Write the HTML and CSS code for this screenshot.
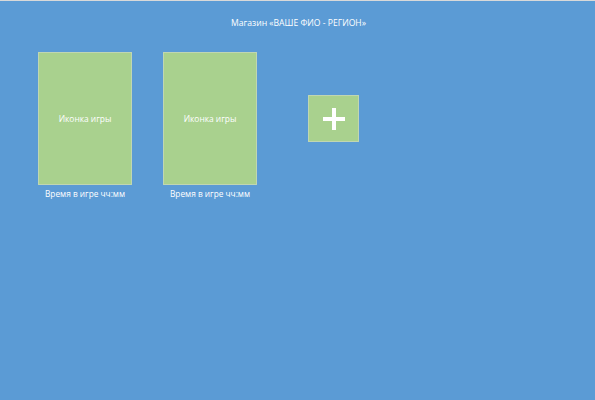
FILE: index.html
```html
<!DOCTYPE html>
<html lang="ru">
<head>
<meta charset="utf-8">
<title>Магазин</title>
<link rel="stylesheet" href="styles.css">
</head>
<body>
<div class="screen">
  <header class="title">Магазин «ВАШЕ ФИО - РЕГИОН»</header>
  <main class="games">
    <div class="game">
      <div class="icon">Иконка игры</div>
      <div class="time">Время в игре чч:мм</div>
    </div>
    <div class="game">
      <div class="icon">Иконка игры</div>
      <div class="time">Время в игре чч:мм</div>
    </div>
    <button class="add" aria-label="Добавить">
      <svg width="22" height="22" viewBox="0 0 22 22"><path d="M9 0h4v9h9v4h-9v9H9v-9H0V9h9z" fill="#fff"/></svg>
    </button>
  </main>
</div>
</body>
</html>
```
FILE: styles.css
```css
html, body {
  margin: 0;
  padding: 0;
  height: 100%;
}
body {
  background: #5b9bd5;
  font-family: "Open Sans", "Noto Sans", sans-serif;
  color: #fff;
}
.screen {
  height: 100%;
  box-sizing: border-box;
  border-top: 1px solid #d9d9d9;
}
.title {
  text-align: center;
  font-size: 8.6px;
  line-height: 12px;
  padding-top: 16px;
  padding-left: 2px;
  font-weight: 500;
}
.games {
  display: flex;
  align-items: flex-start;
  padding-left: 38px;
  padding-top: 23px;
  gap: 31px;
}
.game {
  width: 94px;
  display: flex;
  flex-direction: column;
  align-items: center;
}
.icon {
  box-sizing: border-box;
  width: 94px;
  height: 133px;
  background: #a9d18e;
  border: 1px solid #c0d6b2;
  display: flex;
  align-items: center;
  justify-content: center;
  font-size: 8.4px;
  font-weight: 500;
}
.time {
  margin-top: 3px;
  font-size: 8.3px;
  line-height: 12px;
  font-weight: 500;
}
.add {
  box-sizing: border-box;
  margin-left: 20px;
  margin-top: 43px;
  width: 51px;
  height: 47px;
  background: #a9d18e;
  border: 1px solid #c0d6b2;
  padding: 0;
  display: flex;
  align-items: center;
  justify-content: center;
}
.add svg { display: block; }
```
